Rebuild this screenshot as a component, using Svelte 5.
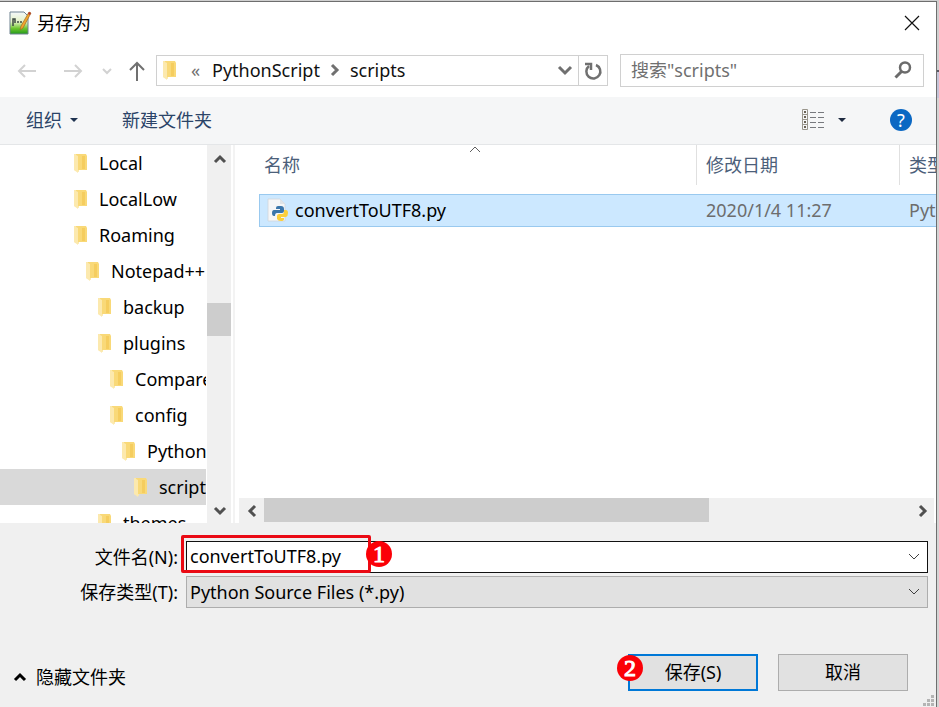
<script lang="ts">
  type Folder = { name: string; depth: number };

  const folders: Folder[] = [
    { name: 'Local', depth: 0 },
    { name: 'LocalLow', depth: 0 },
    { name: 'Roaming', depth: 0 },
    { name: 'Notepad++', depth: 1 },
    { name: 'backup', depth: 2 },
    { name: 'plugins', depth: 2 },
    { name: 'Compare', depth: 3 },
    { name: 'config', depth: 3 },
    { name: 'PythonScript', depth: 4 },
    { name: 'scripts', depth: 5 },
    { name: 'themes', depth: 2 },
  ];

  let selected = $state('scripts');
  let fileName = $state('convertToUTF8.py');
  let query = $state('');
</script>

{#snippet folderIcon()}
  <svg class="folder" width="16" height="20" viewBox="0 0 16 20" aria-hidden="true">
    <path d="M1 1h5v18l-5-2z" fill="#fbe8a8" />
    <path d="M3 1h10l1 2v14H5z" fill="#f9d978" />
    <path d="M9 3h3v13H9z" fill="#f5cd5f" />
    <path d="M1 1l4 2v17l-4-3z" fill="#fce9ae" />
  </svg>
{/snippet}

{#snippet chevron(points: string, width: number)}
  <svg width="16" height="16" viewBox="0 0 16 16" fill="none" stroke="currentColor" stroke-width={width} aria-hidden="true">
    <polyline {points} />
  </svg>
{/snippet}

<div class="dialog">
  <header class="titlebar">
    <svg width="24" height="26" viewBox="0 0 24 26" aria-hidden="true">
      <defs>
        <linearGradient id="page" x1="0" y1="0" x2="0" y2="1">
          <stop offset="0" stop-color="#f4f8fb" />
          <stop offset="0.45" stop-color="#e4f2c4" />
          <stop offset="0.75" stop-color="#6cc52c" />
          <stop offset="1" stop-color="#239a1c" />
        </linearGradient>
      </defs>
      <path d="M2 2h14l4 4v18H2z" fill="url(#page)" stroke="#6f8391" />
      <path d="M5 16V9h2v4M9 12h2M12 12h2" fill="none" stroke="#3c4a42" stroke-width="1.5" />
      <path d="M21 2l2 1-8 15-3 2 1-4z" fill="#f3a52d" stroke="#9c6a26" stroke-width="0.7" />
      <path d="M21 2l2 1-1 2-2-1z" fill="#b53b32" />
    </svg>
    <h1>另存为</h1>
    <button class="close" aria-label="关闭">
      <svg width="16" height="16" viewBox="0 0 16 16" stroke="#111" stroke-width="1.2" aria-hidden="true">
        <path d="M1 1l14 14M15 1L1 15" />
      </svg>
    </button>
  </header>

  <nav class="navbar">
    <button class="faint" aria-label="后退">
      <svg width="20" height="16" viewBox="0 0 20 16" fill="none" stroke="currentColor" stroke-width="2" aria-hidden="true">
        <path d="M19 8H2M8 2L2 8l6 6" />
      </svg>
    </button>
    <button class="faint forward" aria-label="前进">
      <svg width="20" height="16" viewBox="0 0 20 16" fill="none" stroke="currentColor" stroke-width="2" aria-hidden="true">
        <path d="M1 8h17M12 2l6 6-6 6" />
      </svg>
    </button>
    <button class="faint recent" aria-label="最近的位置">{@render chevron('4,6 8,10 12,6', 2)}</button>
    <button class="up" aria-label="上移">
      <svg width="18" height="20" viewBox="0 0 18 20" fill="none" stroke="currentColor" stroke-width="2" aria-hidden="true">
        <path d="M9 20V2M2 9l7-7 7 7" />
      </svg>
    </button>
    <div class="address">
      {@render folderIcon()}
      <span class="overflow">«</span>
      <button class="crumb">PythonScript</button>
      <span class="crumb-sep">{@render chevron('6,3 11,8 6,13', 3)}</span>
      <button class="crumb">scripts</button>
      <button class="history" aria-label="以前的位置">{@render chevron('2,5 8,11 14,5', 3)}</button>
      <button class="refresh" aria-label="刷新">
        <svg width="20" height="20" viewBox="0 0 20 20" fill="none" stroke="currentColor" aria-hidden="true">
          <path d="M13 4a7 7 0 1 1-7 1" stroke-width="2.5" />
          <path d="M2 3h6v6" stroke-width="2.5" />
        </svg>
      </button>
    </div>
    <div class="search">
      <input type="text" placeholder={'搜索"scripts"'} aria-label="搜索" bind:value={query} />
      <svg width="18" height="18" viewBox="0 0 18 18" fill="none" stroke="#6b6b6b" aria-hidden="true">
        <circle cx="11" cy="6.5" r="5" stroke-width="2.5" />
        <path d="M7.5 10.5L1.5 16.5" stroke-width="3" />
      </svg>
    </div>
  </nav>

  <div class="toolbar">
    <button>
      组织
      <svg width="8" height="4" viewBox="0 0 8 4" aria-hidden="true"><path d="M0 0h8L4 4z" fill="#1e3250" /></svg>
    </button>
    <button>新建文件夹</button>
    <button class="view" aria-label="更改您的视图">
      <svg width="22" height="22" viewBox="0 0 22 22" fill="none" aria-hidden="true">
        <path d="M0.5 0.5h5v20h-5zM0.5 5.5h5M0.5 10.5h5M0.5 15.5h5" stroke="#9a968c" />
        <path d="M2 2h2v2H2zM2 7h2v2H2zM2 12h2v2H2zM2 17h2v2H2z" fill="#6a6255" />
        <path d="M8 3.5h6M16 3.5h6M8 8.5h6M16 8.5h6M8 13.5h6M16 13.5h6M8 18.5h6M16 18.5h6" stroke="#77797e" />
      </svg>
      <svg width="8" height="4" viewBox="0 0 8 4" aria-hidden="true"><path d="M0 0h8L4 4z" fill="#1e2a40" /></svg>
    </button>
    <button class="help" aria-label="获取帮助">?</button>
  </div>

  <main class="browser">
    <ul class="tree">
      {#each folders as folder (folder.name)}
        <li>
          <button
            class:selected={folder.name === selected}
            style="padding-left: {73 + folder.depth * 12}px"
            onclick={() => (selected = folder.name)}
          >
            {@render folderIcon()}
            <span>{folder.name}</span>
          </button>
        </li>
      {/each}
    </ul>
    <div class="vscroll">
      <button aria-label="向上滚动">{@render chevron('3,12 8,7 13,12', 3)}</button>
      <div class="space-before"></div>
      <div class="thumb"></div>
      <div class="space-after"></div>
      <button aria-label="向下滚动">{@render chevron('3,5 8,10 13,5', 3)}</button>
    </div>

    <section class="files">
      <div class="list">
        <table>
          <colgroup>
            <col class="col-name" />
            <col class="col-date" />
            <col />
          </colgroup>
          <thead>
            <tr>
              <th>
                <div>名称</div>
                <span class="sort">{@render chevron('3,11 8,6 13,11', 1)}</span>
              </th>
              <th><div>修改日期</div></th>
              <th><div>类型</div></th>
            </tr>
          </thead>
          <tbody>
            <tr>
              <td>
                <div class="file">
                  <svg width="24" height="24" viewBox="0 0 24 24" aria-hidden="true">
                    <path d="M2 1h12l5 5v17H2z" fill="#f5f6f7" stroke="#cfd6dc" stroke-width="0.8" />
                    <path d="M14 1v5h5z" fill="#dfe4e8" />
                    <path d="M12 8h3q3 0 3 3v2q0 2-2 2h-5q-2 0-2 3H8q-2 0-2-3t2-3h6v-1h-4v-1q0-2 2-2z" fill="#3a76ab" />
                    <path d="M18 12h2q2 0 2 3t-2 4h-5v1h3v1q0 2-3 2t-4-2v-3q0-2 2-2h3q2 0 2-2z" fill="#fbcf3b" />
                  </svg>
                  convertToUTF8.py
                </div>
              </td>
              <td>2020/1/4 11:27</td>
              <td>Python File</td>
            </tr>
          </tbody>
        </table>
      </div>
      <div class="hscroll">
        <button aria-label="向左滚动">{@render chevron('11,3 6,8 11,13', 3)}</button>
        <div class="track"><div class="thumb"></div></div>
        <button aria-label="向右滚动">{@render chevron('6,3 11,8 6,13', 3)}</button>
      </div>
    </section>
  </main>

  <form class="fields" onsubmit={(e) => e.preventDefault()}>
    <div class="row">
      <label for="file-name">文件名(N):</label>
      <div class="combo">
        <input id="file-name" type="text" bind:value={fileName} />
        <span class="arrow">{@render chevron('3,5 8,10 13,5', 1)}</span>
        <span class="outline"></span>
        <span class="badge badge-name">1</span>
      </div>
    </div>
    <div class="row">
      <label for="file-type">保存类型(T):</label>
      <div class="combo">
        <select id="file-type">
          <option>Python Source Files (*.py)</option>
        </select>
        <span class="arrow">{@render chevron('3,5 8,10 13,5', 1)}</span>
      </div>
    </div>
  </form>

  <footer>
    <button class="hide-folders">
      {@render chevron('3,11 8,6 13,11', 3)}
      隐藏文件夹
    </button>
    <div class="save-wrap">
      <button class="action save">保存(S)</button>
      <span class="badge badge-save">2</span>
    </div>
    <button class="action">取消</button>
    <svg class="grip" width="12" height="12" viewBox="0 0 12 12" fill="#b4b4b4" aria-hidden="true">
      <path d="M9 0h3v3H9zM9 4h3v3H9zM9 8h3v3H9zM5 4h3v3H5zM5 8h3v3H5zM1 8h3v3H1z" />
    </svg>
  </footer>
</div>

<style>
  :global(body) {
    margin: 0;
    background: linear-gradient(#cfcfcf 70px, #5b5b66 70px, #5b5b66 72px, #c5c4d8 72px, #c5c4d8 98px, #d4d4d4 98px);
  }

  .dialog {
    box-sizing: border-box;
    display: flex;
    flex-direction: column;
    height: calc(100vh - 1px);
    margin: 1px 2px 0 0;
    border-top: 1px solid #6e6e6e;
    border-right: 1px solid #6e6e6e;
    background: #f0f0f0;
    color: #000;
    font-family: 'Noto Sans', 'Noto Sans CJK SC', sans-serif;
    font-size: 18px;
    line-height: 24px;
    overflow: hidden;
  }

  .dialog :global(svg) {
    display: block;
    flex-shrink: 0;
  }

  button,
  input,
  select {
    box-sizing: border-box;
    margin: 0;
    padding: 0;
    border: 0;
    background: transparent;
    color: inherit;
    font: inherit;
  }

  button {
    display: flex;
    align-items: center;
  }

  /* Title bar */
  .titlebar {
    display: flex;
    align-items: center;
    gap: 5px;
    height: 42px;
    padding: 0 16px 0 8px;
    background: #fff;
  }

  h1 {
    flex: 1;
    margin: 0;
    font-size: 18px;
    font-weight: 400;
  }

  /* Navigation */
  .navbar {
    display: flex;
    align-items: center;
    height: 53px;
    padding: 0 12px 0 17px;
    background: #fff;
    color: #707070;
  }

  .faint {
    color: #d2d2d2;
  }

  .forward {
    margin-left: 26px;
  }

  .recent {
    margin-left: 16px;
  }

  .up {
    margin: 0 10px 0 13px;
  }

  .address {
    box-sizing: border-box;
    display: flex;
    align-items: center;
    flex: 1;
    height: 31px;
    padding: 0 0 2px 5px;
    border: 1px solid #d0d0d0;
  }

  .overflow {
    width: 34px;
    padding-left: 13px;
    box-sizing: border-box;
  }

  .crumb {
    color: #111;
  }

  .crumb-sep {
    margin: 0 8px 0 6px;
  }

  .history {
    margin-left: auto;
    padding-right: 5px;
  }

  .refresh {
    justify-content: center;
    align-self: flex-start;
    width: 29px;
    height: 29px;
    border-left: 1px solid #d0d0d0;
  }

  .search {
    box-sizing: border-box;
    display: flex;
    align-items: center;
    width: 304px;
    height: 33px;
    margin-left: 12px;
    padding: 0 11px 2px 10px;
    border: 1px solid #d0d0d0;
  }

  .search input {
    flex: 1;
    min-width: 0;
    outline: none;
  }

  .search input::placeholder {
    color: #707070;
    opacity: 1;
  }

  /* Toolbar */
  .toolbar {
    box-sizing: border-box;
    display: flex;
    align-items: center;
    height: 48px;
    padding: 0 24px 2px 26px;
    border-bottom: 1px solid #e4e6e8;
    background: #f5f6f7;
    color: #2b4468;
  }

  .toolbar button {
    gap: 8px;
    margin-right: 44px;
  }

  .toolbar .view {
    gap: 14px;
    margin-left: auto;
  }

  .toolbar .help {
    justify-content: center;
    width: 22px;
    height: 22px;
    margin-right: 0;
    border-radius: 50%;
    background: #0b68c3;
    color: #fff;
  }

  /* Folder tree */
  .browser {
    display: flex;
    flex: 1;
    min-height: 0;
    background: #fff;
  }

  .tree {
    box-sizing: border-box;
    width: 207px;
    margin: 0;
    padding: 0;
    border-right: 1px solid #fff;
    list-style: none;
    overflow: hidden;
  }

  .tree button {
    gap: 10px;
    width: 100%;
    height: 36px;
    white-space: nowrap;
    overflow: hidden;
  }

  .tree .selected {
    background: #d9d9d9;
  }

  .vscroll {
    display: flex;
    flex-direction: column;
    width: 24px;
    background: #f0f0f0;
    color: #505050;
  }

  .vscroll button,
  .hscroll button {
    justify-content: center;
    width: 25px;
    height: 25px;
  }

  .space-before {
    flex: 133;
  }

  .space-after {
    flex: 162;
  }

  .vscroll .thumb {
    flex: 33;
    background: #cdcdcd;
  }

  /* File list */
  .files {
    display: flex;
    flex-direction: column;
    flex: 1;
    min-width: 0;
    margin-left: 2px;
    border-left: 2px solid #f3f3f3;
  }

  .list {
    flex: 1;
    min-height: 0;
    padding-left: 24px;
    overflow: hidden;
  }

  table {
    width: 100%;
    table-layout: fixed;
    border-spacing: 0;
  }

  .col-name {
    width: 438px;
  }

  .col-date {
    width: 203px;
  }

  th {
    position: relative;
    height: 49px;
    padding: 0;
    color: #4c607a;
    font-weight: 400;
    text-align: left;
    vertical-align: top;
  }

  th div {
    height: 40px;
    padding-left: 5px;
    border-right: 1px solid #e0e0e0;
    line-height: 40px;
    white-space: nowrap;
    overflow: hidden;
  }

  th + th div {
    padding-left: 9px;
  }

  th:last-child div {
    border-right: 0;
  }

  .sort {
    position: absolute;
    top: -4px;
    left: calc(50% - 11px);
    color: #606060;
  }

  td {
    height: 29px;
    padding: 0 0 2px 9px;
    border-top: 1px solid #99c9ef;
    border-bottom: 1px solid #99c9ef;
    background: #cce8ff;
    color: #6d6d6d;
    white-space: nowrap;
    overflow: hidden;
  }

  td:first-child {
    padding-left: 6px;
    border-left: 1px solid #99c9ef;
    color: #000;
  }

  .file {
    display: flex;
    align-items: center;
    gap: 5px;
  }

  .hscroll {
    display: flex;
    height: 25px;
    margin: 0 2px 0 4px;
    background: #f0f0f0;
    color: #505050;
  }

  .track {
    flex: 1;
  }

  .hscroll .thumb {
    width: 69%;
    height: 24px;
    background: #cdcdcd;
  }

  /* File name and type */
  .fields {
    display: flex;
    flex-direction: column;
    gap: 3px;
    padding: 18px 8px 0 0;
  }

  .row {
    display: flex;
    align-items: center;
  }

  .row label {
    width: 178px;
    margin-right: 8px;
    text-align: right;
  }

  .combo {
    position: relative;
    flex: 1;
    display: flex;
  }

  .combo input,
  .combo select {
    width: 100%;
    height: 32px;
    padding: 0 32px 0 3px;
    border: 1px solid #111;
    border-radius: 0;
    outline: none;
    background: #fff;
    appearance: none;
  }

  .combo input {
    padding-bottom: 2px;
  }

  .combo select {
    border-color: #adadad;
    background: #e1e1e1;
  }

  .arrow {
    position: absolute;
    top: 8px;
    right: 6px;
    color: #404040;
    pointer-events: none;
  }

  .outline {
    position: absolute;
    box-sizing: border-box;
    top: -6px;
    left: -5px;
    width: 190px;
    height: 38px;
    border: 3px solid #ea0a14;
    border-radius: 2px;
    pointer-events: none;
  }

  .badge {
    position: absolute;
    width: 26px;
    height: 26px;
    border-radius: 50%;
    background: #fb0007;
    color: #fff;
    font-family: 'Liberation Serif', serif;
    font-size: 24px;
    line-height: 26px;
    text-align: center;
    pointer-events: none;
    -webkit-text-stroke: 1px #fff;
  }

  .badge-name {
    top: 0;
    left: 180px;
  }

  .badge-save {
    top: 1px;
    left: -11px;
  }

  /* Footer */
  footer {
    position: relative;
    display: flex;
    gap: 20px;
    padding: 46px 28px 16px 12px;
  }

  .hide-folders {
    gap: 8px;
    margin: 8px auto 0 0;
  }

  .save-wrap {
    position: relative;
  }

  .action {
    justify-content: center;
    width: 130px;
    height: 37px;
    padding-bottom: 1px;
    border: 1px solid #adadad;
    background: #e1e1e1;
  }

  .save {
    border: 2px solid #0078d7;
  }

  .grip {
    position: absolute;
    right: 2px;
    bottom: 0;
  }
</style>
